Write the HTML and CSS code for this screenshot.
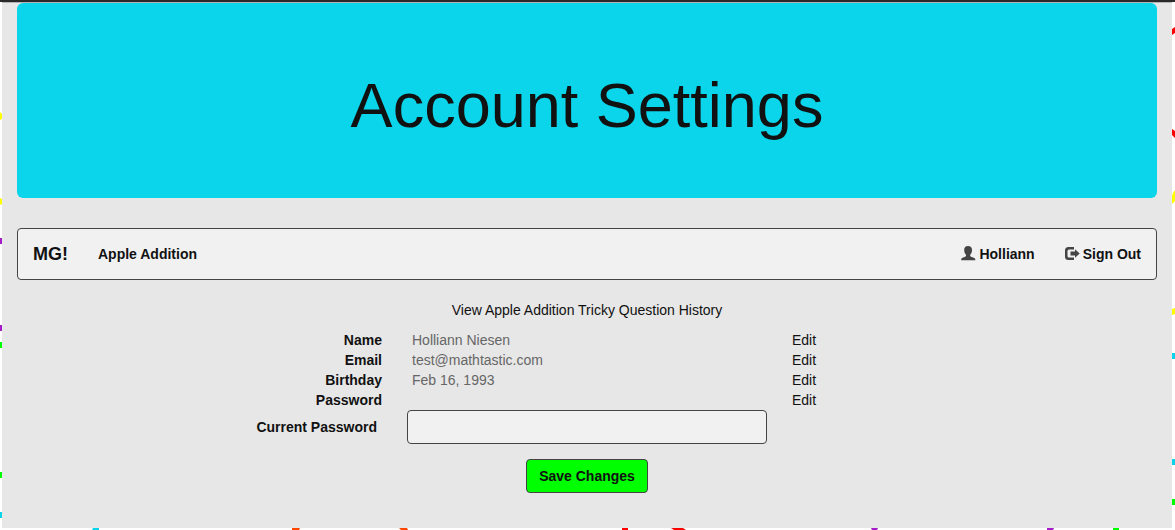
FILE: index.html
```html
<!DOCTYPE html>
<html lang="en">
<head>
<meta charset="utf-8">
<title>Account Settings</title>
<link rel="stylesheet" href="styles.css">
</head>
<body>
<svg class="doodles" width="1175" height="530" viewBox="0 0 1175 530" aria-hidden="true">
  <g fill="#ffff00">
    <path d="M0 112l2 2v5l-2 1zM0 198l2 1v5l-2 1zM1172 196q1-4 3-6v11l-3 3zM1172 309l3-1v6l-3 1z"/>
  </g>
  <g fill="#a41bc8">
    <path d="M0 238h2v6H0zM0 325h2v6H0zM871 528h7l-1 2h-5zM1047 528h7l-1 2h-6z"/>
  </g>
  <g fill="#00ff00">
    <path d="M0 342h2v6H0zM0 472h2v6H0zM1172 499h3v6h-3zM1113 528h6v2h-6z"/>
  </g>
  <g fill="#0bd4ea">
    <path d="M0 512h2v6H0zM1172 353h3v6h-3zM1172 459h3v6h-3zM93 528h6v2h-7z"/>
  </g>
  <g fill="#ff0000">
    <path d="M1172 29l3-2v6l-3 2zM1172 129l3 2v7l-3-3zM622 528h6v2h-6zM671 528h12l3 2h-12z"/>
  </g>
  <g fill="#ff4500">
    <path d="M292 528h8l-1 2h-7zM399 528h8l1 2h-7z"/>
  </g>
</svg>
<div class="container">
  <header class="jumbotron">
    <h1 class="title">Account Settings</h1>
  </header>
  <nav class="navbar" aria-label="Main">
    <a class="nav-link brand" href="#">MG!</a>
    <a class="nav-link" href="#">Apple Addition</a>
    <div class="nav-right">
      <a class="nav-link" href="#">
        <svg class="icon" viewBox="0 0 14 14" aria-hidden="true"><path d="M7 -1C9.600 -1 11 0.500 11 3C11 5 10.400 6.600 9.200 7.700V8.800C9.200 9.500 10 9.800 11.500 10.300C13.300 10.900 14.300 11.500 14.300 12.500V13.300H0.200V12.500C0.200 11.500 1 10.900 2.800 10.300C4.200 9.800 5 9.500 5 8.800V7.700C3.800 6.600 3.200 5 3.200 3C3.200 0.500 4.500 -1 7 -1Z"/></svg>
        <span>Holliann</span>
      </a>
      <a class="nav-link" href="#">
        <svg class="icon" viewBox="0 0 14 14" aria-hidden="true"><path d="M9 0V2.500H4Q2.500 2.500 2.500 4V9Q2.500 10.500 4 10.500H9V13H3.500Q0 13 0 9.500V3.500Q0 0 3.500 0ZM10 2.200L14.700 6.500L10 10.800V8.500H5.500V4.500H10Z"/></svg>
        <span>Sign Out</span>
      </a>
    </div>
  </nav>
  <main>
    <p class="history"><a class="link" href="#">View Apple Addition Tricky Question History</a></p>
    <table class="details">
      <tbody>
        <tr><th scope="row">Name</th><td>Holliann Niesen</td><td><a class="link" href="#">Edit</a></td></tr>
        <tr><th scope="row">Email</th><td>test@mathtastic.com</td><td><a class="link" href="#">Edit</a></td></tr>
        <tr><th scope="row">Birthday</th><td>Feb 16, 1993</td><td><a class="link" href="#">Edit</a></td></tr>
        <tr><th scope="row">Password</th><td></td><td><a class="link" href="#">Edit</a></td></tr>
      </tbody>
    </table>
    <form class="password-form">
      <div class="form-row">
        <label class="form-label" for="current-password">Current Password</label>
        <div class="form-field"><input class="form-input" id="current-password" type="password"></div>
      </div>
      <button class="save" type="button">Save Changes</button>
    </form>
  </main>
</div>
</body>
</html>
```

FILE: styles.css
```css
* {
  box-sizing: border-box;
}

body {
  margin: 0;
  padding-right: 1px;
  border-top: 2px solid #292929;
  background: #fff;
  color: #111;
  font: 14px/20px "Liberation Sans", Arial, sans-serif;
}

.doodles {
  position: absolute;
  top: 0;
  left: 0;
  z-index: -1;
  max-width: 100%;
}

.container {
  max-width: 1170px;
  margin: 0 auto;
  padding: 0 15px 35px;
  border-top: 1px solid #b4b4b4;
  background: #e7e7e7;
}

.jumbotron {
  margin-bottom: 30px;
  padding: 68px 60px 58px;
  border-radius: 6px;
  background: #0bd5eb;
  text-align: center;
}

.title {
  margin: 0;
  font-size: 63px;
  font-weight: 400;
  line-height: 69px;
}

.navbar {
  display: flex;
  align-items: center;
  margin-bottom: 20px;
  border: 1px solid #444;
  border-radius: 4px;
  background: #f1f1f1;
}

.nav-link {
  display: flex;
  align-items: center;
  gap: 4px;
  padding: 15px;
  color: #111;
  font-weight: 700;
  text-decoration: none;
}

.brand {
  font-size: 18px;
}

.nav-right {
  display: flex;
  margin-left: auto;
}

.icon {
  width: 14px;
  height: 14px;
  fill: #444;
  overflow: visible;
}

.history {
  margin: 0 0 10px;
  text-align: center;
}

.link {
  color: #111;
  text-decoration: none;
}

.details {
  width: 100%;
  table-layout: fixed;
  border-collapse: collapse;
}

.details th,
.details td {
  padding: 0 15px;
  text-align: left;
  color: #666;
}

.details th {
  color: #111;
  text-align: right;
}

.password-form {
  margin: 0 -15px;
  text-align: center;
}

.form-row {
  display: grid;
  grid-template-columns: repeat(3, 1fr);
  align-items: center;
  margin-bottom: 15px;
}

.form-label {
  padding: 0 15px;
  font-weight: 700;
  text-align: right;
}

.form-field {
  padding: 0 15px;
}

.form-input {
  display: block;
  width: 100%;
  padding: 6px 12px;
  border: 1px solid #444;
  border-radius: 4px;
  background: #f1f1f1;
  color: #111;
  font: inherit;
}

.save {
  display: inline-block;
  padding: 6px 12px;
  border: 1px solid #444;
  border-radius: 4px;
  background: #0f0;
  color: #111;
  font: inherit;
  font-weight: 700;
  vertical-align: top;
}
```
